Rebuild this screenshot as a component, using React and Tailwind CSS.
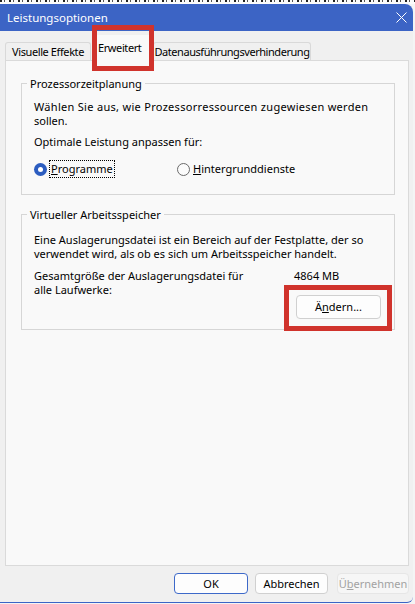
import React from 'react';

function Radio({ checked }) {
  if (checked) {
    return (
      <span className="w-[13px] h-[13px] rounded-full bg-[#2c5dc0] flex items-center justify-center shrink-0">
        <span className="w-[5px] h-[5px] rounded-full bg-white" />
      </span>
    );
  }
  return <span className="w-[13px] h-[13px] rounded-full border border-[#6a6a6a] bg-[#fbfbfb] shrink-0" />;
}

function Group({ title, children }) {
  return (
    <fieldset className="w-[374px] border border-[#d6d6d6]">
      <legend className="ml-[5px] px-[3px] leading-[15px] text-black">{title}</legend>
      {children}
    </fieldset>
  );
}

export default function App() {
  return (
    <div className="w-[415px] h-[604px] overflow-hidden bg-[#f4f4f4] font-['Noto_Sans','DejaVu_Sans',sans-serif] text-[11px] leading-[14px] text-black">
      {/* edge of the window behind */}
      <div className="h-[4px] bg-[#fbfbfb] flex flex-col">
        <div className="h-[2px] bg-[repeating-linear-gradient(90deg,#222_0_2px,transparent_2px_4px,#555_4px_5px,transparent_5px_9px)]" />
      </div>

      <div className="w-[413px] h-[599px] flex flex-col bg-[#f0f0f0] rounded-tr-[8px] rounded-br-[6px] border-b border-[#3c64c5] overflow-hidden">
        {/* title bar */}
        <div className="h-[27px] shrink-0 bg-[#3c64c5] flex items-center justify-between pl-[7px] pr-[6px] text-white text-[11.5px]">
          <span>Leistungsoptionen</span>
          <svg width="11" height="11" viewBox="0 0 11 11">
            <path d="M0.5 0.5 L10.5 10.5 M10.5 0.5 L0.5 10.5" stroke="white" strokeWidth="1" fill="none" />
          </svg>
        </div>

        {/* body */}
        <div className="flex-1 flex flex-col pl-[5px] pr-[4px] pt-[11px]">
          {/* tabs */}
          <div className="h-[18px] flex items-end tracking-[-0.4px]">
            <div className="w-[86px] h-[18px] border border-b-0 border-[#d9d9d9] rounded-t-[3px] bg-[#f0f0f0] flex justify-center pt-[2px] whitespace-nowrap">
              Visuelle Effekte
            </div>
            <div className="relative z-10 w-[61px] h-[26px] -mb-[1px] ml-[1px] bg-[#f9f9f9] pl-[6px] pt-[6px] whitespace-nowrap">
              Erweitert
              <div className="absolute left-0 -top-[10px] w-[62px] h-[46px] border-[5px] border-[#d0332c]" />
            </div>
            <div className="w-[158px] h-[18px] border border-b-0 border-[#d9d9d9] rounded-t-[3px] bg-[#f0f0f0] flex justify-center pt-[2px] whitespace-nowrap tracking-[-0.45px]">
              Datenausführungsverhinderung
            </div>
          </div>

          {/* tab panel */}
          <div className="w-[404px] h-[506px] shrink-0 border border-[#dadada] bg-[#f9f9f9] pl-[15px] pt-[15px] flex flex-col">
            <Group title="Prozessorzeitplanung">
              <div className="pl-[12px] pt-[9px] pb-[16px]">
                <div className="whitespace-nowrap">
                  <span className="tracking-[0.3px]">Wählen Sie aus, wie Prozessorressourcen zugewiesen werden</span>
                  <br />
                  sollen.
                </div>
                <div className="mt-[7px]">Optimale Leistung anpassen für:</div>
                <div className="mt-[11px] flex items-center">
                  <div className="w-[143px] flex items-center">
                    <Radio checked />
                    <span className="ml-[2px] border border-dotted border-black px-[1px] py-[1px]">
                      <u>P</u>rogramme
                    </span>
                  </div>
                  <div className="flex items-center">
                    <Radio />
                    <span className="ml-[3px]">
                      <u>H</u>intergrunddienste
                    </span>
                  </div>
                </div>
              </div>
            </Group>

            <div className="mt-[12px]">
              <Group title="Virtueller Arbeitsspeicher">
                <div className="pl-[12px] pt-[11px] pb-[10px]">
                  <div className="whitespace-nowrap">
                    Eine Auslagerungsdatei ist ein Bereich auf der Festplatte, der so
                    <br />
                    verwendet wird, als ob es sich um Arbeitsspeicher handelt.
                  </div>
                  <div className="mt-[8px] flex">
                    <div className="w-[260px] whitespace-nowrap">
                      Gesamtgröße der Auslagerungsdatei für
                      <br />
                      alle Laufwerke:
                    </div>
                    <div className="flex flex-col">
                      <span>4864 MB</span>
                      <div className="relative mt-[12px] ml-[2px] w-[85px] h-[24px] rounded-[4px] border border-[#d0d0d0] bg-[#fdfdfd] flex items-center justify-center">
                        <span>
                          Ä<u>n</u>dern...
                        </span>
                        <div className="absolute -left-[13px] -top-[11px] w-[108px] h-[46px] border-[5px] border-[#d0332c]" />
                      </div>
                    </div>
                  </div>
                </div>
              </Group>
            </div>
          </div>

          {/* dialog buttons */}
          <div className="mt-[7px] flex justify-end">
            <button className="w-[74px] h-[21px] rounded-[4px] border border-[#3d69c9] bg-[#fdfdfd] flex items-center justify-center">
              OK
            </button>
            <button className="ml-[7px] w-[73px] h-[21px] rounded-[4px] border border-[#d0d0d0] bg-[#fdfdfd] flex items-center justify-center">
              Abbrechen
            </button>
            <button className="ml-[9px] w-[72px] h-[21px] rounded-[4px] border border-[#e6e6e6] bg-[#f6f6f6] text-[#a2a2a2] flex items-center justify-center">
              Ü<u>b</u>ernehmen
            </button>
          </div>
        </div>
      </div>
    </div>
  );
}
